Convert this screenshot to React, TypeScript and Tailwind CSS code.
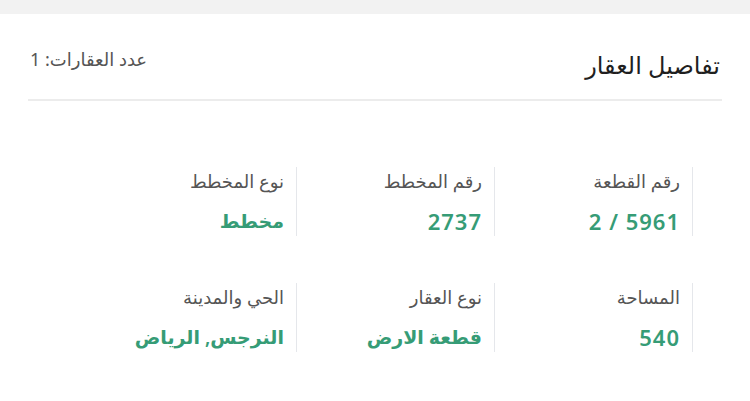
const details = [
  [
    { label: "رقم القطعة", value: "2 / 5961", num: true },
    { label: "رقم المخطط", value: "2737", num: true },
    { label: "نوع المخطط", value: "مخطط" },
  ],
  [
    { label: "المساحة", value: "540", num: true },
    { label: "نوع العقار", value: "قطعة الارض" },
    { label: "الحي والمدينة", value: "النرجس, الرياض" },
  ],
];

function Field({ label, value, num }: { label: string; value: string; num?: boolean }) {
  return (
    <div className="border-r border-gray-200 pr-3 flex flex-col gap-[15px] py-[2px]">
      <span className="text-[18px] leading-[24px] text-[#555]">{label}</span>
      <span
        className={
          num
            ? "text-[22px] leading-[26px] font-semibold tracking-[1px] text-[#369c76]"
            : "text-[19px] leading-[26px] font-semibold text-[#369c76]"
        }
      >
        <bdi dir={num ? "ltr" : "rtl"}>{value}</bdi>
      </span>
    </div>
  );
}

export default function App() {
  return (
    <div
      dir="rtl"
      className="w-[750px] h-[401px] bg-white overflow-hidden"
      style={{ fontFamily: '"Noto Sans", "DejaVu Sans", sans-serif' }}
    >
      <div className="h-[14px] bg-[#f2f2f2]" />
      <div className="px-[28px]">
        <div className="flex justify-between items-center pt-[33px] pb-[18px] border-b-2 border-[#ececec]">
          <h1 className="text-[24px] leading-[32px] text-[#1f1f1f] pr-[2px] mt-[2px]">تفاصيل العقار</h1>
          <span className="text-[18px] text-[#555] -mt-[10px] pl-[2px]">عدد العقارات: 1</span>
        </div>
        <div className="flex flex-col gap-[47px] pt-[66px] pr-[29px]">
          {details.map((row, i) => (
            <div key={i} className="grid grid-cols-[198px_198px_198px]">
              {row.map((f) => (
                <Field key={f.label} label={f.label} value={f.value} num={f.num} />
              ))}
            </div>
          ))}
        </div>
      </div>
    </div>
  );
}
